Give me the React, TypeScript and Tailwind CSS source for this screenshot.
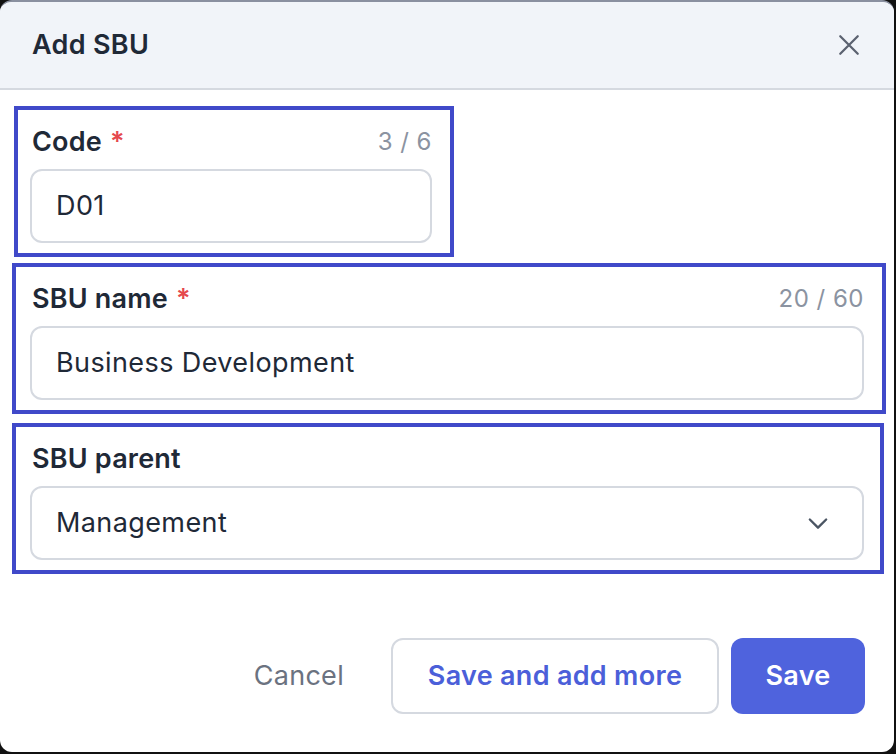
import React from "react";

const F = { fontFamily: "Inter, 'Liberation Sans', sans-serif" };

function Field({ label, req, count, value, select, cls }: { label: string; req?: boolean; count?: string; value: string; select?: boolean; cls: string }) {
  return (
    <div className={`border-4 border-[#4049c9] pt-[14px] pb-[10px] ${cls}`}>
      <div className="flex items-center justify-between pl-[2px] h-[36px]">
        <div className="text-[27px] font-semibold text-[#1f2937] tracking-[0.2px]">
          {label}
          {req && <span className="text-[#e5484d] ml-[8px]">*</span>}
        </div>
        {count && <div className="text-[24px] text-[#8b93a1] tracking-[0.5px]">{count}</div>}
      </div>
      <div className="mt-[9px] h-[74px] rounded-[12px] border-2 border-[#d5d9e0] flex items-center justify-between pl-[24px] pr-[30px] text-[27px] tracking-[0.4px] text-[#1f2937]">
        <span>{value}</span>
        {select && (
          <svg width="28" height="28" viewBox="0 0 24 24" fill="none" stroke="#4b5563" strokeWidth="2" strokeLinecap="round" strokeLinejoin="round"><path d="M5 9l7 7 7-7" /></svg>
        )}
      </div>
    </div>
  );
}

export default function App() {
  return (
    <div className="w-[896px] h-[754px] bg-[#111] overflow-hidden" style={F}>
      <div className="w-[894px] h-[752px] bg-white rounded-[12px] overflow-hidden border-t-2 border-[#8a90a0] flex flex-col">
        <div className="h-[88px] bg-[#f1f4f9] border-b-2 border-[#d5d9e0] flex items-center justify-between pl-[32px] pr-[30px] shrink-0">
          <div className="text-[27px] font-semibold text-[#1f2937] tracking-[0.3px]">Add SBU</div>
          <svg width="30" height="30" viewBox="0 0 24 24" fill="none" stroke="#5b6270" strokeWidth="1.8" strokeLinecap="round"><path d="M5 5l14 14M19 5L5 19" /></svg>
        </div>
        <div className="mt-[16px] flex flex-col">
          <Field cls="ml-[14px] w-[440px] pl-[12px] pr-[18px]" label="Code" req count="3 / 6" value="D01" />
          <Field cls="mt-[6px] ml-[12px] w-[874px] pl-[14px] pr-[18px]" label="SBU name" req count="20 / 60" value="Business Development" />
          <Field cls="mt-[9px] ml-[12px] w-[872px] pl-[14px] pr-[16px]" label="SBU parent" value="Management" select />
        </div>
        <div className="mt-[64px] flex items-center justify-end pr-[29px]">
          <div className="text-[27px] text-[#6b7280] mr-[47px] tracking-[0.3px]">Cancel</div>
          <div className="h-[76px] w-[328px] rounded-[12px] border-2 border-[#d5d9e0] flex items-center justify-center text-[27px] font-semibold text-[#4b5fd9] tracking-[0.3px]">Save and add more</div>
          <div className="ml-[12px] h-[76px] w-[134px] rounded-[12px] bg-[#4f63dd] flex items-center justify-center text-[27px] font-semibold text-white tracking-[0.3px]">Save</div>
        </div>
      </div>
    </div>
  );
}
